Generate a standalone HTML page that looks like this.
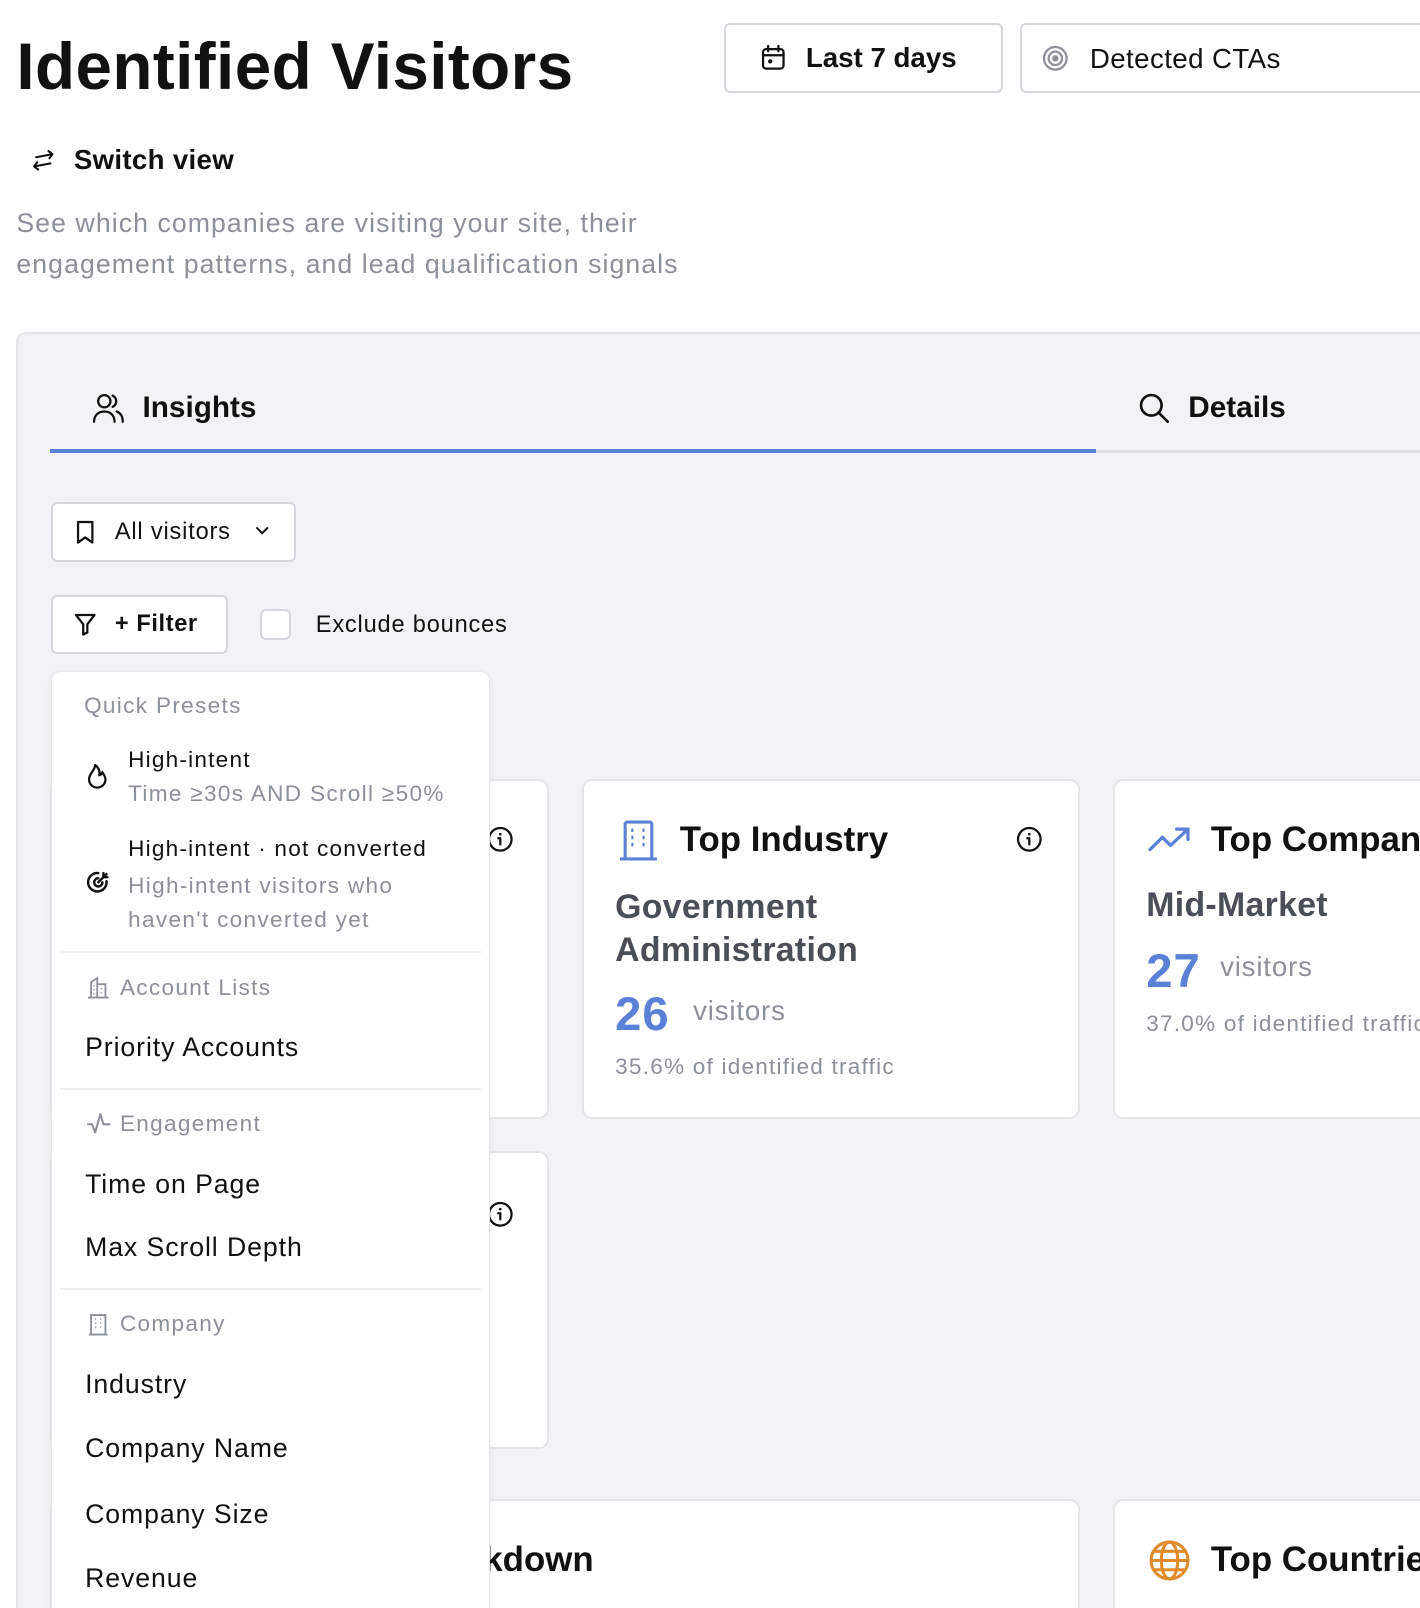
<!DOCTYPE html>
<html><head><meta charset="utf-8"><style>
html,body{margin:0;padding:0;background:#fff;overflow:hidden;width:1420px;height:1608px}
#r{zoom:1.02527;position:relative;width:1385px;height:1568px;overflow:hidden;font-family:"Liberation Sans",Arial,sans-serif;color:#111}
.a{position:absolute;white-space:nowrap}
.btn{position:absolute;background:#fff;border:2px solid #d4d7dc;border-radius:6px;box-sizing:border-box}
.card{position:absolute;background:#fff;border:2px solid #e3e5e9;border-radius:10px;box-sizing:border-box}
.g{color:#8b9099}
.dd .it{font-size:26px;color:#111;left:32px;letter-spacing:0.9px}
.dd .h{font-size:22px;color:#8b9099;letter-spacing:1.3px}
.s22{letter-spacing:1.2px}
.div{position:absolute;left:8px;width:410px;height:2px;background:#eceef1}
svg{position:absolute;overflow:visible}
</style></head><body><div id="r">
<div class="a" style="left:16px;top:28px;font-size:64px;font-weight:700;letter-spacing:0.4px">Identified Visitors</div>

<div class="btn" style="left:706px;top:22px;width:272px;height:69px"></div>
<svg style="left:742px;top:44px" width="24" height="26" viewBox="0 0 24 26" fill="none" stroke="#111" stroke-width="2.2" stroke-linecap="round"><rect x="2" y="4" width="20" height="19" rx="3"/><path d="M7 1v5M17 1v5M2 10h20"/><circle cx="9" cy="16" r="1" fill="#111"/></svg>
<div class="a" style="left:786px;top:41px;font-size:27px;font-weight:600">Last 7 days</div>

<div class="btn" style="left:995px;top:22px;width:420px;height:69px"></div>
<svg style="left:1016px;top:44px" width="26" height="26" viewBox="0 0 26 26" fill="none" stroke="#8b9099" stroke-width="2.2"><circle cx="13" cy="13" r="11"/><circle cx="13" cy="13" r="6.5"/><circle cx="13" cy="13" r="2" fill="#8b9099"/></svg>
<div class="a" style="left:1063px;top:42px;font-size:27px;letter-spacing:0.4px">Detected CTAs</div>

<svg style="left:30px;top:144px" width="24" height="24" viewBox="0 0 24 24" fill="none" stroke="#111" stroke-width="2" stroke-linecap="round" stroke-linejoin="round"><path d="M5 9l16-3M17 3l4 3-3 4M19 15L3 18M7 21l-4-3 3-4"/></svg>
<div class="a" style="left:72px;top:140px;font-size:27px;font-weight:600;letter-spacing:0.3px">Switch view</div>
<div class="a g" style="left:16px;top:198px;font-size:26px;line-height:40px;letter-spacing:1.05px">See which companies are visiting your site, their<br>engagement patterns, and lead qualification signals</div>

<div style="position:absolute;left:16px;top:324px;width:1420px;height:1300px;background:#f2f3f5;border:2px solid #e3e5e8;border-radius:10px"></div>

<svg style="left:90px;top:382px" width="32" height="32" viewBox="0 0 32 32" fill="none" stroke="#111" stroke-width="2.2" stroke-linecap="round"><circle cx="12" cy="9" r="6"/><path d="M2 29c0-6 4-10 10-10s10 4 10 10"/><path d="M20 3.5a6 6 0 0 1 0 11M24 19c4 1.5 6 5 6 10"/></svg>
<div class="a" style="left:139px;top:381px;font-size:29px;font-weight:600">Insights</div>
<svg style="left:1110px;top:382px" width="32" height="32" viewBox="0 0 32 32" fill="none" stroke="#111" stroke-width="2.6" stroke-linecap="round"><circle cx="13" cy="13" r="10"/><path d="M21 21l8 8"/></svg>
<div class="a" style="left:1159px;top:381px;font-size:29px;font-weight:600">Details</div>
<div style="position:absolute;left:49px;top:438px;width:1020px;height:4px;background:#5b80d8"></div>
<div style="position:absolute;left:1069px;top:439px;width:400px;height:3px;background:#dfe1e5"></div>

<div class="btn" style="left:50px;top:490px;width:239px;height:58px"></div>
<svg style="left:74px;top:507px" width="18" height="24" viewBox="0 0 18 24" fill="none" stroke="#111" stroke-width="2.2" stroke-linejoin="round"><path d="M2 2h14v20l-7-5-7 5z"/></svg>
<div class="a" style="left:112px;top:505px;font-size:23px;font-weight:500;letter-spacing:0.8px">All visitors</div>
<svg style="left:249px;top:513px" width="14" height="10" viewBox="0 0 14 10" fill="none" stroke="#111" stroke-width="2" stroke-linecap="round"><path d="M2 2l5 5 5-5"/></svg>

<div class="btn" style="left:50px;top:580px;width:172px;height:58px"></div>
<svg style="left:72px;top:598px" width="22" height="22" viewBox="0 0 22 22" fill="none" stroke="#111" stroke-width="2.2" stroke-linejoin="round"><path d="M2 2h18l-7 9v8l-4 2V11z"/></svg>
<div class="a" style="left:112px;top:595px;font-size:23px;font-weight:600;letter-spacing:0.6px">+ Filter</div>
<div style="position:absolute;left:254px;top:594px;width:30px;height:30px;border:2px solid #d4d7dc;border-radius:6px;background:#fff;box-sizing:border-box"></div>
<div class="a" style="left:308px;top:596px;font-size:23px;letter-spacing:0.8px">Exclude bounces</div>

<div class="card" style="left:49px;top:760px;width:486px;height:331px"></div>
<svg style="left:476px;top:807px" width="24" height="24" viewBox="0 0 24 24" fill="none" stroke="#111" stroke-width="2.2"><circle cx="12" cy="12" r="11"/><path d="M12 11v6M10 11h2" stroke-linecap="round"/><circle cx="12" cy="7" r="1.3" fill="#111" stroke="none"/></svg>
<div class="card" style="left:568px;top:760px;width:485px;height:331px"></div>
<svg style="left:604px;top:800px" width="38" height="40" viewBox="0 0 38 40" fill="none" stroke="#5b80d8" stroke-width="3"><path d="M6 38V4a2 2 0 0 1 2-2h22a2 2 0 0 1 2 2v34M1 38h36"/><path d="M12 10h2M23 10h2M12 17h2M23 17h2M12 24h2M23 24h2" stroke-width="3.5"/></svg>
<div class="a" style="left:663px;top:800px;font-size:34px;font-weight:700">Top Industry</div>
<svg style="left:992px;top:807px" width="24" height="24" viewBox="0 0 24 24" fill="none" stroke="#111" stroke-width="2.2"><circle cx="12" cy="12" r="11"/><path d="M12 11v6M10 11h2" stroke-linecap="round"/><circle cx="12" cy="7" r="1.3" fill="#111" stroke="none"/></svg>
<div class="a" style="left:600px;top:864px;font-size:33px;font-weight:600;color:#4a4e57;line-height:42px;letter-spacing:0.3px">Government<br>Administration</div>
<div class="a" style="left:600px;top:962px;font-size:46px;font-weight:700;color:#5b80d8;letter-spacing:1px">26</div>
<div class="a g" style="left:676px;top:970px;font-size:27px;letter-spacing:0.8px">visitors</div>
<div class="a g s22" style="left:600px;top:1028px;font-size:22px">35.6% of identified traffic</div>

<div class="card" style="left:1086px;top:760px;width:400px;height:331px"></div>
<svg style="left:1120px;top:806px" width="42" height="26" viewBox="0 0 42 26" fill="none" stroke="#5b80d8" stroke-width="3.2" stroke-linecap="round" stroke-linejoin="round"><path d="M2 23l12-12 8 8L39 3M28 3h11v10"/></svg>
<div class="a" style="left:1181px;top:800px;font-size:34px;font-weight:700">Top Companies</div>
<div class="a" style="left:1118px;top:864px;font-size:33px;font-weight:600;color:#4a4e57;letter-spacing:0.3px">Mid-Market</div>
<div class="a" style="left:1118px;top:920px;font-size:46px;font-weight:700;color:#5b80d8;letter-spacing:1px">27</div>
<div class="a g" style="left:1190px;top:928px;font-size:27px;letter-spacing:0.8px">visitors</div>
<div class="a g s22" style="left:1118px;top:986px;font-size:22px">37.0% of identified traffic</div>

<div class="card" style="left:49px;top:1123px;width:486px;height:290px"></div>
<svg style="left:476px;top:1172px" width="24" height="24" viewBox="0 0 24 24" fill="none" stroke="#111" stroke-width="2.2"><circle cx="12" cy="12" r="11"/><path d="M12 11v6M10 11h2" stroke-linecap="round"/><circle cx="12" cy="7" r="1.3" fill="#111" stroke="none"/></svg>

<div class="card" style="left:49px;top:1462px;width:1004px;height:200px"></div>
<div class="a" style="left:0;width:579px;text-align:right;top:1502px;font-size:34px;font-weight:700">Industry Breakdown</div>
<div class="card" style="left:1086px;top:1462px;width:400px;height:200px"></div>
<svg style="left:1121px;top:1502px" width="40" height="40" viewBox="0 0 40 40" fill="none" stroke="#e08a2c" stroke-width="3"><circle cx="20" cy="20" r="18"/><ellipse cx="20" cy="20" rx="8" ry="18"/><path d="M2 20h36M5 11h30M5 29h30"/></svg>
<div class="a" style="left:1181px;top:1502px;font-size:34px;font-weight:700">Top Countries</div>

<div class="dd" style="position:absolute;left:51px;top:655px;width:426px;height:960px;background:#fff;border-radius:8px;box-shadow:0 2px 8px rgba(0,0,0,.08),0 0 0 1px #eceef1">
<div class="a h" style="left:31px;top:21px">Quick Presets</div>
<svg style="left:34px;top:89px" width="20" height="26" viewBox="0 0 20 26" fill="none" stroke="#111" stroke-width="2.2" stroke-linejoin="round"><path d="M8 2c0 5-6 8-6 14a8 8 0 0 0 16 0c0-3-2-5-3-7-1 2-2 3-3 3 1-4-1-8-4-10z"/></svg>
<div class="a s22" style="left:74px;top:74px;font-size:22px">High-intent</div>
<div class="a h" style="left:74px;top:107px">Time ≥30s AND Scroll ≥50%</div>
<svg style="left:33px;top:194px" width="24" height="24" viewBox="0 0 24 24" fill="none" stroke="#111" stroke-width="2.4" stroke-linecap="round"><path d="M20 11a9 9 0 1 1-8-8"/><path d="M16 12a4 4 0 1 1-4-4"/><path d="M12 12l8-8M17 3v4h4"/></svg>
<div class="a s22" style="left:74px;top:160px;font-size:22px">High-intent · not converted</div>
<div class="a h" style="left:74px;top:193px;line-height:33px">High-intent visitors who<br>haven't converted yet</div>
<div class="div" style="top:273px"></div>
<svg style="left:34px;top:297px" width="22" height="22" viewBox="0 0 22 22" fill="none" stroke="#8b9099" stroke-width="1.8"><path d="M1 21h20M4 21V6l6-4v19M10 8h8v13M7 9v1M7 13v1M7 17v1M14 12v1M14 16v1"/></svg>
<div class="a h" style="left:66px;top:296px">Account Lists</div>
<div class="a it" style="top:352px">Priority Accounts</div>
<div class="div" style="top:406px"></div>
<svg style="left:34px;top:430px" width="24" height="22" viewBox="0 0 24 22" fill="none" stroke="#8b9099" stroke-width="2" stroke-linejoin="round" stroke-linecap="round"><path d="M1 12h4l3 8 5-18 3 10h6"/></svg>
<div class="a h" style="left:66px;top:429px">Engagement</div>
<div class="a it" style="top:485px">Time on Page</div>
<div class="a it" style="top:547px">Max Scroll Depth</div>
<div class="div" style="top:601px"></div>
<svg style="left:35px;top:626px" width="20" height="22" viewBox="0 0 20 22" fill="none" stroke="#8b9099" stroke-width="1.8"><path d="M3 21V2h14v19M1 21h18M7 6h1M12 6h1M7 10h1M12 10h1M7 14h1M12 14h1"/></svg>
<div class="a h" style="left:66px;top:624px">Company</div>
<div class="a it" style="top:680px">Industry</div>
<div class="a it" style="top:743px">Company Name</div>
<div class="a it" style="top:807px">Company Size</div>
<div class="a it" style="top:869px">Revenue</div>
</div>
</div></body></html>
